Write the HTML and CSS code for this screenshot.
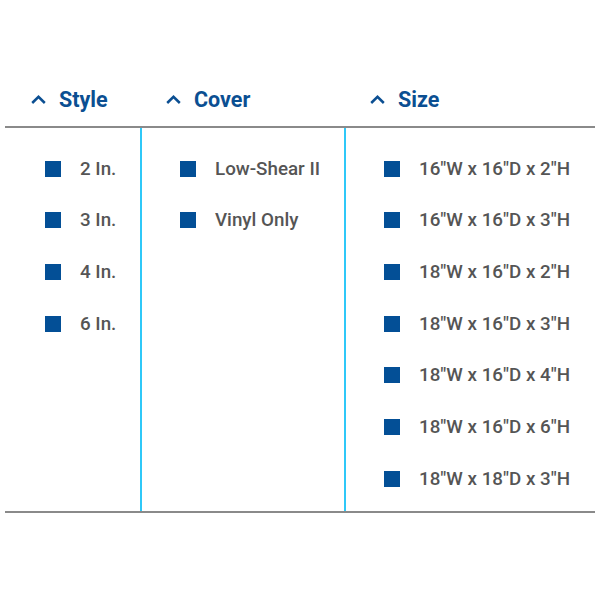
FILE: index.html
```html
<!DOCTYPE html>
<html lang="en">

<head>
    <meta charset="UTF-8">
    <meta name="viewport" content="width=device-width, initial-scale=1.0">
    <title>Filters</title>
    <link rel="stylesheet" href="styles.css">
</head>

<body>
    <div class="filters">
        <!-- Filter headings -->
        <div class="heads">
            <div class="head col-style">
                <svg class="chevron" viewBox="0 0 15 9"><path d="M1.2 8 L7.5 1.8 L13.8 8" /></svg>
                <span>Style</span>
            </div>
            <div class="head col-cover">
                <svg class="chevron" viewBox="0 0 15 9"><path d="M1.2 8 L7.5 1.8 L13.8 8" /></svg>
                <span>Cover</span>
            </div>
            <div class="head col-size">
                <svg class="chevron" viewBox="0 0 15 9"><path d="M1.2 8 L7.5 1.8 L13.8 8" /></svg>
                <span>Size</span>
            </div>
        </div>

        <!-- Filter options -->
        <div class="panel">
            <ul class="options col-style">
                <li><span class="box"></span>2 In.</li>
                <li><span class="box"></span>3 In.</li>
                <li><span class="box"></span>4 In.</li>
                <li><span class="box"></span>6 In.</li>
            </ul>
            <ul class="options col-cover">
                <li><span class="box"></span>Low-Shear II</li>
                <li><span class="box"></span>Vinyl Only</li>
            </ul>
            <ul class="options col-size">
                <li><span class="box"></span>16"W x 16"D x 2"H</li>
                <li><span class="box"></span>16"W x 16"D x 3"H</li>
                <li><span class="box"></span>18"W x 16"D x 2"H</li>
                <li><span class="box"></span>18"W x 16"D x 3"H</li>
                <li><span class="box"></span>18"W x 16"D x 4"H</li>
                <li><span class="box"></span>18"W x 16"D x 6"H</li>
                <li><span class="box"></span>18"W x 18"D x 3"H</li>
            </ul>
        </div>
    </div>
</body>

</html>
```

FILE: styles.css
```css
body {
    margin: 0;
    padding: 0;
    background-color: #fff;
    font-family: Roboto, "Liberation Sans", Arial, sans-serif;
}

.filters {
    margin: 0 5px;
    padding-top: 79px;
}

/* Headings */
.heads,
.panel {
    display: grid;
    grid-template-columns: 135px 204px 1fr;
}

.heads {
    height: 40px;
    margin-bottom: 7px;
}

.head {
    display: flex;
    align-items: center;
    padding-left: 26px;
    font-size: 21.5px;
    font-weight: bold;
    color: #0b4f92;
}

.chevron {
    width: 15px;
    height: 9px;
    margin-right: 13px;
    fill: none;
    stroke: #0b4f92;
    stroke-width: 2.5;
}

/* Option lists */
.panel {
    border-top: 2px solid #8a8a8a;
    border-bottom: 2px solid #8a8a8a;
}

.options {
    list-style: none;
    margin: 0;
    padding: 15px 0 6px 40px;
}

.col-cover,
.col-size {
    border-left: 2px solid #2fc8f8;
}

.panel .col-cover,
.panel .col-size {
    padding-left: 38px;
}

.heads .col-cover,
.heads .col-size {
    border-left: 2px solid transparent;
    padding-left: 24px;
}

.options li {
    display: flex;
    align-items: center;
    height: 51.66px;
    font-size: 18.8px;
    font-weight: 500;
    color: #555;
}

.box {
    width: 16px;
    height: 16px;
    margin-right: 19px;
    background-color: #034f96;
}
```
